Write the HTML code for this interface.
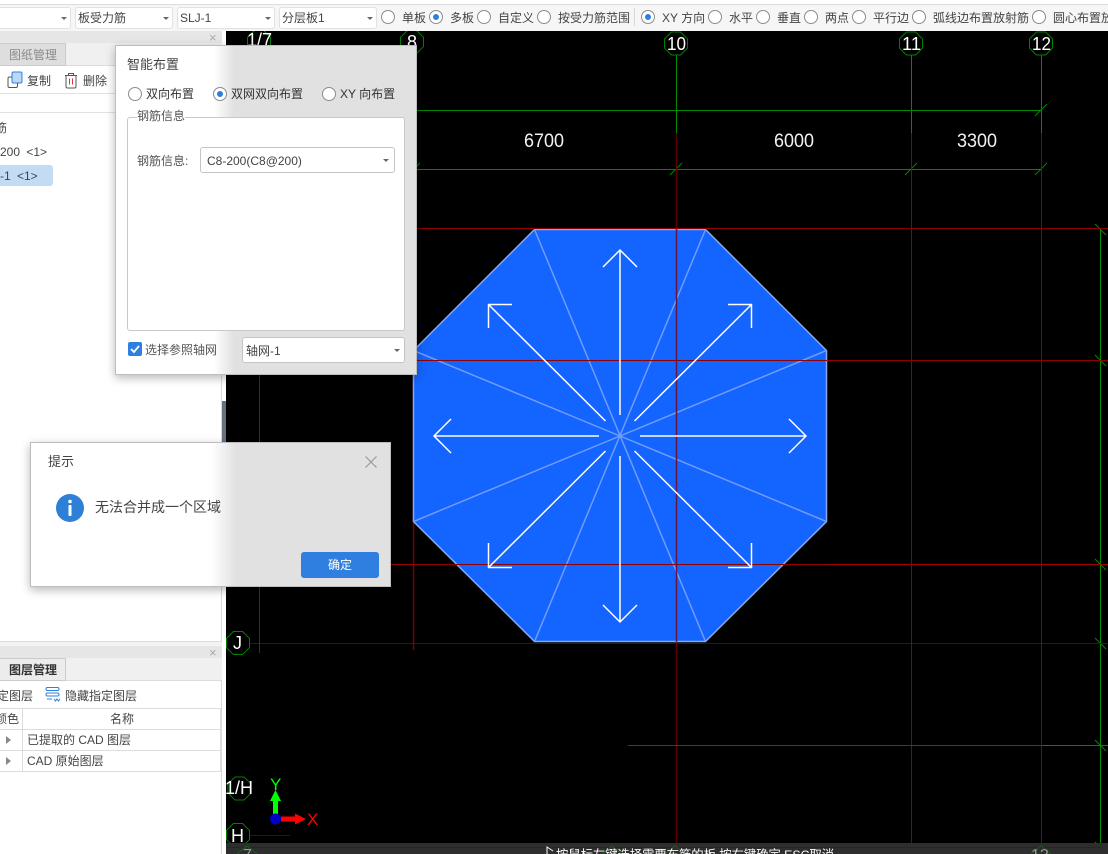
<!DOCTYPE html>
<html lang="zh">
<head>
<meta charset="utf-8">
<title>智能布置</title>
<style>
html,body{margin:0;padding:0;background:#fff}
#p{position:relative;width:1108px;height:854px;overflow:hidden;background:#fff;font:12px/16px "Liberation Sans","Noto Sans CJK SC",sans-serif;color:#444}
#p div,#p span,#p svg{position:absolute;display:block}
.t{white-space:nowrap}
.combo{background:#fff;border:1px solid #e2e2e2;border-radius:3px;box-sizing:border-box;height:22px;top:7px}
.sel{background:#fff;border:1px solid #c4c4c4;border-radius:3px;box-sizing:border-box}
.arr{width:0;height:0;border-left:3px solid transparent;border-right:3px solid transparent;border-top:3px solid #667}
.r{width:12px;height:12px;border:1px solid #8c8c8c;border-radius:50%;background:#fff}
.r.on::after{content:"";position:absolute;left:3px;top:3px;width:6px;height:6px;border-radius:50%;background:#2e7fe0}
.dlg{border:1px solid #bdbdbd;box-sizing:border-box;box-shadow:0 3px 9px rgba(0,0,0,.28)}
</style>
</head>
<body>
<div id="p">

<!-- toolbar -->
<div style="left:0;top:0;width:1108px;height:31px;background:#f6f6f6"></div>
<div style="left:0;top:0;width:1108px;height:4px;background:#fff"></div>
<div style="left:0;top:4px;width:1108px;height:1px;background:#dcdcdc"></div>
<div class="combo" style="left:-4px;width:75px"></div><div class="arr" style="left:61px;top:17px"></div>
<div class="combo" style="left:75px;width:98px"></div><div class="arr" style="left:163px;top:17px"></div>
<span class="t" style="left:78px;top:10px">板受力筋</span>
<div class="combo" style="left:177px;width:98px"></div><div class="arr" style="left:265px;top:17px"></div>
<span class="t" style="left:180px;top:10px">SLJ-1</span>
<div class="combo" style="left:279px;width:98px"></div><div class="arr" style="left:367px;top:17px"></div>
<span class="t" style="left:282px;top:10px">分层板1</span>

<div class="r" style="left:381px;top:10px"></div><span class="t" style="left:402px;top:10px">单板</span>
<div class="r on" style="left:429px;top:10px"></div><span class="t" style="left:450px;top:10px">多板</span>
<div class="r" style="left:477px;top:10px"></div><span class="t" style="left:498px;top:10px">自定义</span>
<div class="r" style="left:537px;top:10px"></div><span class="t" style="left:558px;top:10px">按受力筋范围</span>
<div style="left:634px;top:8px;width:1px;height:18px;background:#d8d8d8"></div>
<div class="r on" style="left:641px;top:10px"></div><span class="t" style="left:662px;top:10px">XY 方向</span>
<div class="r" style="left:708px;top:10px"></div><span class="t" style="left:729px;top:10px">水平</span>
<div class="r" style="left:756px;top:10px"></div><span class="t" style="left:777px;top:10px">垂直</span>
<div class="r" style="left:804px;top:10px"></div><span class="t" style="left:825px;top:10px">两点</span>
<div class="r" style="left:852px;top:10px"></div><span class="t" style="left:873px;top:10px">平行边</span>
<div class="r" style="left:912px;top:10px"></div><span class="t" style="left:933px;top:10px">弧线边布置放射筋</span>
<div class="r" style="left:1032px;top:10px"></div><span class="t" style="left:1053px;top:10px">圆心布置放射筋</span>

<!-- left panels -->
<div style="left:0;top:31px;width:222px;height:823px;background:#fff;border-right:1px solid #d8d8d8;box-sizing:border-box"></div>
<div style="left:222px;top:31px;width:4px;height:370px;background:#fff"></div>
<div style="left:222px;top:401px;width:4px;height:186px;background:#667280"></div>
<div style="left:222px;top:587px;width:4px;height:267px;background:#fff"></div>

<div style="left:0;top:31px;width:222px;height:12px;background:#e6e6e6"></div>
<span class="t" style="left:209px;top:30px;color:#aaa;font-size:13px">×</span>
<div style="left:0;top:43px;width:222px;height:23px;background:#f0f0f0;border-bottom:1px solid #dcdcdc;box-sizing:border-box"></div>
<div style="left:-1px;top:43px;width:67px;height:23px;background:#dedede;border:1px solid #ccc;box-sizing:border-box"></div>
<span class="t" style="left:9px;top:47px;color:#8a8a8a">图纸管理</span>

<svg style="left:7px;top:71px" width="16" height="18" viewBox="0 0 16 18"><rect x="5" y="1" width="10" height="11" rx="1.5" fill="#bcd8f6" stroke="#2e7fe0"/><path d="M5 6H2.500Q1 6 1 7.500V15Q1 16.500 2.500 16.500H9Q10.500 16.500 10.500 15V12" fill="none" stroke="#555"/></svg>
<span class="t" style="left:27px;top:73px">复制</span>
<svg style="left:64px;top:72px" width="14" height="17" viewBox="0 0 14 17"><path d="M1 3.500H13M4.500 3.500V1.500H9.500V3.500M2 3.500V14.500Q2 16 3.500 16H10.500Q12 16 12 14.500V3.500" fill="none" stroke="#555"/><path d="M5.500 6.500V12.500M8.500 6.500V12.500" stroke="#d33" fill="none"/></svg>
<span class="t" style="left:83px;top:73px">删除</span>
<div style="left:0;top:93px;width:221px;height:1px;background:#e2e2e2"></div>
<div style="left:0;top:112px;width:221px;height:1px;background:#e2e2e2"></div>
<span class="t" style="left:-5px;top:120px">筋</span>
<span class="t" style="left:0;top:144px;word-spacing:3px">200 &lt;1&gt;</span>
<div style="left:-6px;top:165px;width:59px;height:21px;background:#c3dcf5;border-radius:3px"></div>
<span class="t" style="left:0;top:168px;word-spacing:3px">-1 &lt;1&gt;</span>

<div style="left:0;top:641px;width:222px;height:5px;background:#f3f3f3;border-top:1px solid #dcdcdc;box-sizing:border-box"></div>
<div style="left:0;top:646px;width:222px;height:12px;background:#e6e6e6"></div>
<span class="t" style="left:209px;top:645px;color:#aaa;font-size:13px">×</span>
<div style="left:0;top:658px;width:222px;height:23px;background:#f0f0f0;border-bottom:1px solid #dcdcdc;box-sizing:border-box"></div>
<div style="left:-1px;top:658px;width:67px;height:23px;background:#ececec;border:1px solid #ccc;box-sizing:border-box"></div>
<span class="t" style="left:9px;top:662px;color:#333;font-weight:bold">图层管理</span>
<span class="t" style="left:-3px;top:688px">定图层</span>
<svg style="left:44px;top:686px" width="17" height="17" viewBox="0 0 17 17"><g fill="none" stroke="#2e7fe0"><rect x="2" y="1.500" width="13" height="3" rx="1.500"/><rect x="2" y="7" width="13" height="3" rx="1.500"/><path d="M3 13H8M10 13L11.500 15L13 13L14.500 15L16 13"/></g></svg>
<span class="t" style="left:65px;top:688px">隐藏指定图层</span>

<div style="left:0;top:708px;width:221px;height:1px;background:#dcdcdc"></div>
<div style="left:0;top:729px;width:221px;height:1px;background:#dcdcdc"></div>
<div style="left:0;top:750px;width:221px;height:1px;background:#dcdcdc"></div>
<div style="left:0;top:771px;width:221px;height:1px;background:#dcdcdc"></div>
<div style="left:22px;top:708px;width:1px;height:64px;background:#dcdcdc"></div>
<div style="left:220px;top:708px;width:1px;height:64px;background:#dcdcdc"></div>
<span class="t" style="left:-5px;top:711px">颜色</span>
<span class="t" style="left:110px;top:711px">名称</span>
<div style="left:6px;top:736px;width:0;height:0;border-top:4px solid transparent;border-bottom:4px solid transparent;border-left:5px solid #888"></div>
<span class="t" style="left:27px;top:732px">已提取的 CAD 图层</span>
<div style="left:6px;top:757px;width:0;height:0;border-top:4px solid transparent;border-bottom:4px solid transparent;border-left:5px solid #888"></div>
<span class="t" style="left:27px;top:753px">CAD 原始图层</span>

<!-- canvas -->
<svg style="left:226px;top:31px" width="882" height="823" viewBox="226 31 882 823" font-family="Liberation Sans, sans-serif">
<defs><polygon id="o" points="-4.600,-11.500 4.600,-11.500 11.500,-4.600 11.500,4.600 4.600,11.500 -4.600,11.500 -11.500,4.600 -11.500,-4.600" fill="none" stroke="#008000"/></defs>
<rect x="226" y="31" width="882" height="823" fill="#000"/>
<g fill="none" stroke="#008a00" stroke-width="1">
 <path d="M226 110.500H1041M226 169.500H1041"/>
 <path d="M676.500 55V133M911.500 55V133M1041.500 55V133"/>
 <path d="M1100.500 229V854"/>
 <path d="M1041 745.500H1108"/>
 <path d="M1035 116L1047 104M670 175L682 163M905 175L917 163M1035 175L1047 163M408 175L420 163"/>
 <path d="M1095 224L1106 235M1095 355L1106 366M1095 559L1106 570M1095 638L1106 649M1095 740L1106 751M1095 842L1106 853"/>
</g>
<use href="#o" x="676" y="43.500"/><use href="#o" x="911" y="43.500"/><use href="#o" x="1041" y="43.500"/>
<use href="#o" x="412" y="42"/><use href="#o" x="259" y="42"/>
<use href="#o" x="238" y="643"/><use href="#o" x="239.500" y="788.500"/><use href="#o" x="238" y="835"/>
<g fill="none" stroke="#900000" stroke-width="1">
 <path d="M413 228.500H1108M226 360.500H1108"/>
 <path d="M226 564.500H1108" stroke="#a00000"/>
 <path d="M250 643.500H1108" stroke="#640000"/>
 <path d="M259.500 360V653" stroke="#a80000"/>
 <path d="M413.500 229V650" stroke="#7a0000" stroke-width="1.500"/>
 <path d="M676.500 133V854" stroke="#600000" stroke-width="1.500"/>
 <path d="M911.500 133V854M1041.500 133V854"/>
</g>
<path d="M628 745.500H1041" stroke="#d00000"/>

<polygon points="534.500,229.500 705.500,229.500 826.500,350.500 826.500,521.500 705.500,641.500 534.500,641.500 413.500,521.500 413.500,350.500" fill="#1464ff" stroke="#86a9f2" stroke-width="1.500"/>
<g stroke="#6f9df8" stroke-width="1.500" fill="none">
 <path d="M534.500 229.500L705.500 641.500M705.500 229.500L534.500 641.500M413.500 350.500L826.500 521.500M826.500 350.500L413.500 521.500"/>
</g>
<g fill="none" stroke="#900000" stroke-width="1">
 <path d="M413 228.500H827M413 360.500H827M413 564.500H827"/>
 <path d="M676.500 229V642" stroke="#6a1240" stroke-width="1.500"/>
</g>
<g fill="none" stroke="#fff" stroke-width="1.500">
 <path d="M620 415V250M603 267L620 250L637 267"/>
 <path d="M620 456V622M603 605L620 622L637 605"/>
 <path d="M599 436H434M451 419L434 436L451 453"/>
 <path d="M640 436H806M789 419L806 436L789 453"/>
 <path d="M605.500 421L488.500 304.500M488.500 328V304.500H512"/>
 <path d="M634.500 421L751.500 304.500M728 304.500H751.500V328"/>
 <path d="M605.500 451L488.500 567.500M488.500 543V567.500H512"/>
 <path d="M634.500 451L751.500 567.500M751.500 543V567.500H728"/>
</g>
<g fill="#f2f2f2" font-size="19">
 <text x="524" y="147" textLength="40" lengthAdjust="spacingAndGlyphs">6700</text>
 <text x="774" y="147" textLength="40" lengthAdjust="spacingAndGlyphs">6000</text>
 <text x="957" y="147" textLength="40" lengthAdjust="spacingAndGlyphs">3300</text>
</g>
<g fill="#fff" font-size="18">
 <text x="667" y="50" textLength="19" lengthAdjust="spacingAndGlyphs">10</text>
 <text x="902" y="50" textLength="19" lengthAdjust="spacingAndGlyphs">11</text>
 <text x="1032" y="50" textLength="19" lengthAdjust="spacingAndGlyphs">12</text>
 <text x="407" y="48">8</text>
 <text x="247" y="46">1/7</text>
 <text x="233" y="649">J</text>
 <text x="225" y="794">1/H</text>
 <text x="231" y="842">H</text>
</g>
<path d="M250 835.500H290" stroke="#5a0000"/>
<!-- gizmo -->
<path d="M273 814V801H270L275.500 790L281 801H278V814Z" fill="#00ff00"/>
<path d="M281 816.500H295V813.500L306 819L295 824.500V821.500H281Z" fill="#ff0000"/>
<circle cx="275.500" cy="819" r="5.500" fill="#0000c8"/>
<text x="270" y="790" fill="#00ff00" font-size="17">Y</text>
<text x="307" y="825" fill="#ff0000" font-size="17">X</text>
<!-- status bar -->
<rect x="226" y="843" width="882" height="11" fill="#2e2e2e"/>
<path d="M226 847.500H1100" stroke="#5a1010"/>
<g fill="none" stroke="#1f5a1f"><path d="M237 854L247 846L257 854M602 854L612 846L622 854M665 854L675 846L685 854M1031 854L1041 846L1051 854"/></g>
<path d="M547 854V847L553 851" fill="none" stroke="#fff"/>
<text x="556" y="859" fill="#fff" font-size="12.300" font-family="Liberation Sans, Noto Sans CJK SC, sans-serif">按鼠标左键选择需要布筋的板,按右键确定,ESC取消</text>
<text x="243" y="860" fill="#999" font-size="16">7</text>
<text x="1031" y="860" fill="#999" font-size="16">12</text>
</svg>

<!-- 智能布置 dialog -->
<div class="dlg" style="left:115px;top:45px;width:302px;height:330px;background:linear-gradient(90deg,#fff 0,#fff 98px,#e1e1e1 118px)"></div>
<span class="t" style="left:127px;top:57px;font-size:13px">智能布置</span>
<div class="r" style="left:128px;top:87px"></div><span class="t" style="left:146px;top:86px;color:#333">双向布置</span>
<div class="r on" style="left:213px;top:87px"></div><span class="t" style="left:231px;top:86px;color:#333">双网双向布置</span>
<div class="r" style="left:322px;top:87px"></div><span class="t" style="left:340px;top:86px;color:#333">XY 向布置</span>
<div style="left:127px;top:117px;width:278px;height:214px;background:#fff;border:1px solid #c8c8c8;border-radius:3px;box-sizing:border-box"></div>
<span class="t" style="left:137px;top:108px;color:#555;background:linear-gradient(180deg,transparent 50%,#fff 50%)">钢筋信息</span>
<span class="t" style="left:137px;top:153px;color:#555">钢筋信息:</span>
<div class="sel" style="left:200px;top:147px;width:195px;height:26px"></div>
<span class="t" style="left:207px;top:153px">C8-200(C8@200)</span>
<div class="arr" style="left:383px;top:159px"></div>
<div style="left:128px;top:342px;width:14px;height:14px;background:#2e7fe0;border-radius:2px"></div>
<svg style="left:128px;top:342px" width="14" height="14" viewBox="0 0 14 14"><path d="M3 7L6 10L11 4" fill="none" stroke="#fff" stroke-width="1.800"/></svg>
<span class="t" style="left:145px;top:342px;color:#555">选择参照轴网</span>
<div class="sel" style="left:242px;top:337px;width:163px;height:26px"></div>
<span class="t" style="left:246px;top:343px">轴网-1</span>
<div class="arr" style="left:394px;top:349px"></div>

<!-- 提示 dialog -->
<div class="dlg" style="left:30px;top:442px;width:361px;height:145px;background:linear-gradient(90deg,#fff 0,#fff 180px,#e1e1e1 205px)"></div>
<span class="t" style="left:48px;top:454px;font-size:13px">提示</span>
<svg style="left:364px;top:455px" width="14" height="14" viewBox="0 0 14 14"><path d="M1.500 1.500L12.500 12.500M12.500 1.500L1.500 12.500" stroke="#999" fill="none" stroke-width="1.200"/></svg>
<svg style="left:56px;top:494px" width="28" height="28" viewBox="0 0 28 28"><circle cx="14" cy="14" r="14" fill="#2e7fd6"/><circle cx="14" cy="7.500" r="1.800" fill="#fff"/><rect x="12.500" y="11" width="3" height="11" rx="1" fill="#fff"/></svg>
<span class="t" style="left:95px;top:499px;font-size:14px">无法合并成一个区域</span>
<div style="left:301px;top:552px;width:78px;height:26px;background:#2e7fe0;border-radius:3px"></div>
<span class="t" style="left:328px;top:557px;color:#fff">确定</span>

</div>
</body>
</html>
